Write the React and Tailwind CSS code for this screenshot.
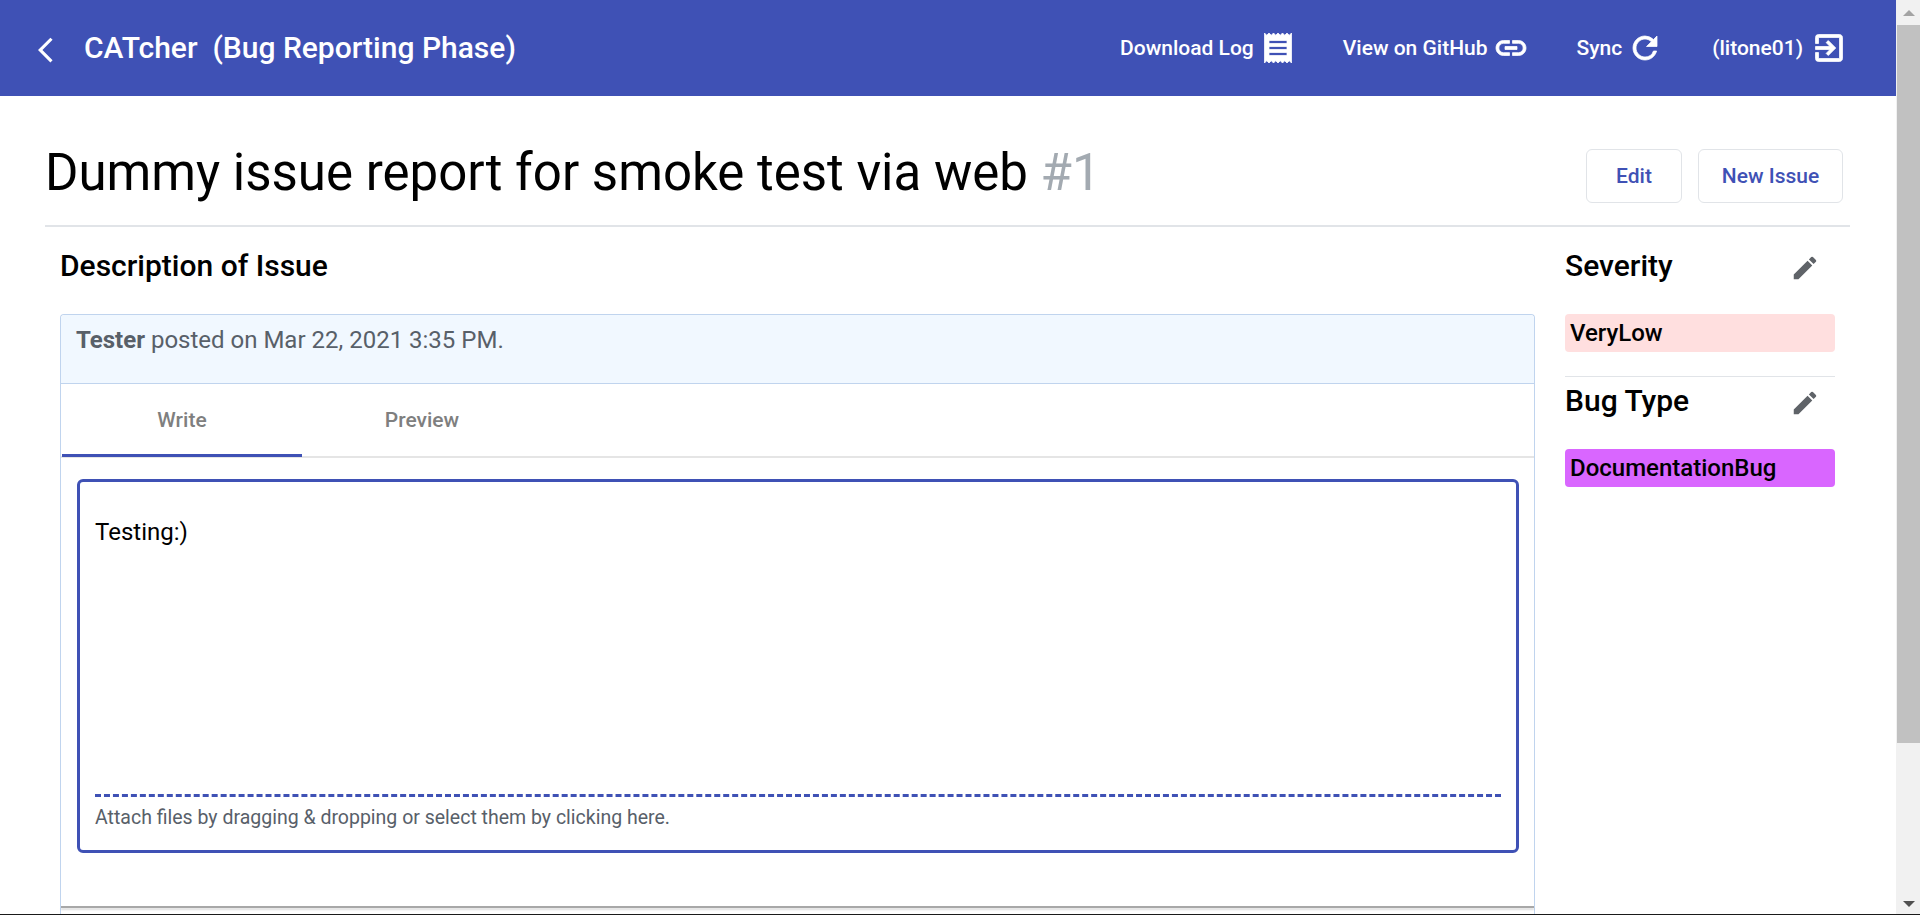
import React from 'react';
import { MdArrowBackIos, MdReceipt, MdLink, MdRefresh, MdExitToApp, MdEdit } from 'react-icons/md';

const HeaderLink = ({ label, Icon, className, iconClass }) => (
  <div className={`flex items-center text-white text-[21px] font-medium ${className}`}>
    <span className="pt-[2px]">{label}</span>
    <Icon className={`text-[36px] stroke-[0.5px] [&_path[fill=none]]:stroke-0 ${iconClass}`} />
  </div>
);

const Label = ({ title, value, color, titleClass }) => (
  <div className={titleClass}>
    <div className="flex items-center justify-between pr-[15px]">
      <h3 className="text-[30px] leading-[38px] font-medium text-black">{title}</h3>
      <MdEdit className="mt-[4px] text-[30px] text-[#5f6368]" />
    </div>
    <div className={`mt-[29px] h-[38px] rounded-[4px] pl-[5px] text-[24px] leading-[38px] font-medium text-black ${color}`}>
      {value}
    </div>
  </div>
);

const Scrollbar = () => (
  <div className="w-6 shrink-0 flex flex-col bg-[#f1f1f1] pl-px">
    <div className="h-[25px] flex items-center justify-center">
      <div className="w-0 h-0 border-x-[6px] border-x-transparent border-b-[6px] border-b-[#a3a3a3]" />
    </div>
    <div className="h-[718px] bg-[#c1c1c1]" />
    <div className="flex-1 flex items-end justify-center pb-[7px]">
      <div className="w-0 h-0 border-x-[6px] border-x-transparent border-t-[6px] border-t-[#505050]" />
    </div>
  </div>
);

export default function App() {
  return (
    <div className="h-[915px] overflow-hidden flex flex-col font-['Roboto',sans-serif] bg-white">
      <div className="flex flex-1 min-h-0">
        <div className="flex-1 min-w-0">
          <header className="h-24 bg-[#3f51b5] flex items-center pl-[38px] pr-[49px]">
            <MdArrowBackIos className="mt-[3px] text-white text-[30px]" />
            <span className="ml-[16px] mb-[2px] text-white text-[30px] font-medium">CATcher&nbsp; (Bug Reporting Phase)</span>
            <div className="ml-auto flex items-center">
              <HeaderLink label="Download Log" Icon={MdReceipt} iconClass="ml-[6px]" />
              <HeaderLink label="View on GitHub" Icon={MdLink} iconClass="ml-[5px]" className="ml-[47px]" />
              <HeaderLink label="Sync" Icon={MdRefresh} iconClass="ml-[5px]" className="ml-[48px]" />
              <HeaderLink label="(litone01)" Icon={MdExitToApp} iconClass="ml-[8px]" className="ml-[49px]" />
            </div>
          </header>

          <div className="pl-[45px] pr-[46px]">
            <div className="h-[131px] flex items-center border-b-2 border-[#e1e4e8] pt-[30px]">
              <h1 className="mb-[4px] text-[51px] font-normal text-black">
                Dummy issue report for smoke test via web <span className="text-[#a3aab1]">#1</span>
              </h1>
              <div className="ml-auto flex gap-[16px] pr-[7px]">
                <button className="w-[96px] h-[54px] pt-[2px] bg-white border border-[#e1e4e8] rounded-[6px] text-[#3f51b5] text-[21px] font-medium">Edit</button>
                <button className="w-[145px] h-[54px] pt-[2px] bg-white border border-[#e1e4e8] rounded-[6px] text-[#3f51b5] text-[21px] font-medium">New Issue</button>
              </div>
            </div>

            <div className="flex">
              <div className="w-[1489px] pl-[15px]">
                <h2 className="mt-[20px] text-[30px] leading-[38px] font-medium text-black">Description of Issue</h2>
                <div className="mt-[29px] h-[603px] w-[1475px] border border-b-0 border-[#c0d4ee] rounded-t-[4px] flex flex-col">
                  <div className="h-[69px] bg-[#f1f8ff] border-b border-[#c0d4ee] pl-[15px] pt-[10px] text-[24px] leading-[30px] text-[#586069] rounded-t-[4px]">
                    <b className="font-bold">Tester</b> posted on Mar 22, 2021 3:35 PM.
                  </div>
                  <div className="h-[74px] pl-px flex border-b-2 border-[#e5e5e5]">
                    <div className="w-[240px] h-[73px] pt-[3px] flex items-center justify-center border-b-[3px] border-[#3f51b5] text-[21px] font-medium text-[#7f7f7f]">Write</div>
                    <div className="w-[240px] h-[73px] pt-[1px] flex items-center justify-center text-[21px] font-medium text-[#7f7f7f]">Preview</div>
                  </div>
                  <div className="pl-[16px] pr-[15px] pt-[21px]">
                    <div className="h-[374px] border-[3px] border-[#3f51b5] rounded-[6px] px-[15px] flex flex-col">
                      <div className="flex-1 pt-[35px] text-[24px] leading-[30px] text-black">Testing:)</div>
                      <div className="border-t-[3px] border-dashed border-[#3f51b5]" />
                      <div className="h-[53px] pt-[7px] text-[19.5px] leading-[28px] text-[#586069]">
                        Attach files by dragging &amp; dropping or select them by clicking here.
                      </div>
                    </div>
                  </div>
                  <div className="mt-auto mb-[9px] h-[2px] bg-[#a8a8a8] shadow-[0_2px_2px_rgba(0,0,0,0.14)]" />
                </div>
              </div>
              <div className="w-[270px] ml-[31px]">
                <Label title="Severity" value="VeryLow" color="bg-[#ffdfdf]" titleClass="pt-[20px] pb-[24px] border-b border-[#e1e4e8]" />
                <Label title="Bug Type" value="DocumentationBug" color="bg-[#d966ff]" titleClass="pt-[5px]" />
              </div>
            </div>
          </div>
        </div>
        <Scrollbar />
      </div>
      <div className="h-px bg-[#1a1a1a]" />
    </div>
  );
}
